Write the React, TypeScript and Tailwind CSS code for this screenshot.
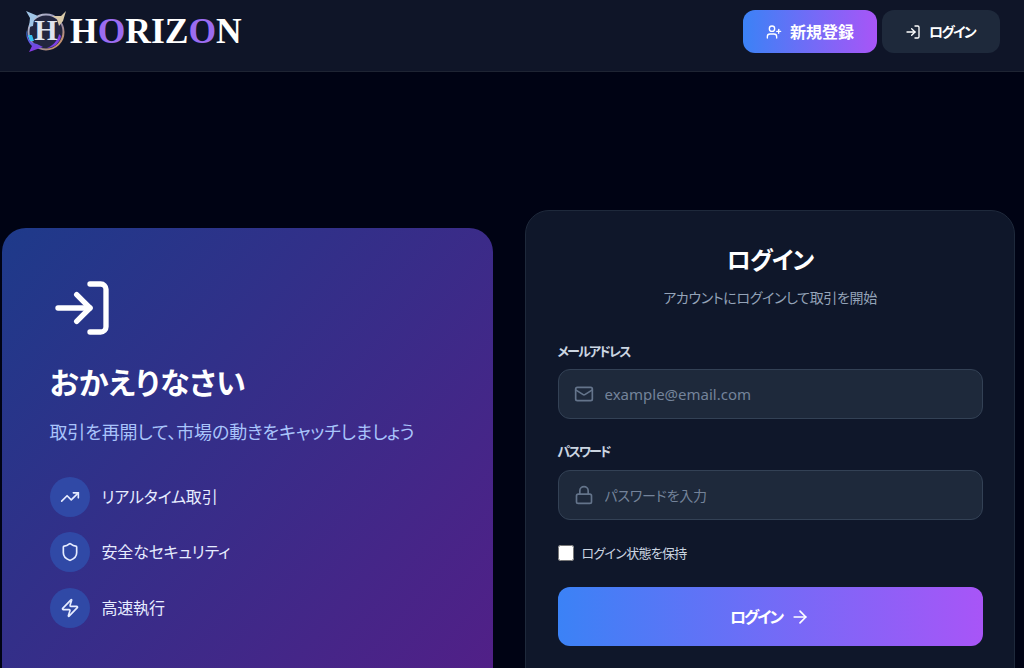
import { ArrowRight, Lock, LogIn, Mail, Shield, TrendingUp, UserPlus, Zap } from "lucide-react";

const features = [
  { icon: TrendingUp, label: "リアルタイム取引" },
  { icon: Shield, label: "安全なセキュリティ" },
  { icon: Zap, label: "高速執行" },
];

function Emblem() {
  return (
    <svg width="42" height="42" viewBox="0 0 42 42" className="shrink-0">
      <defs>
        <linearGradient id="ring" x1="0" y1="0" x2="1" y2="1">
          <stop offset="0" stopColor="#c4c9d6" />
          <stop offset="0.55" stopColor="#8a86b0" />
          <stop offset="1" stopColor="#e0964f" />
        </linearGradient>
        <linearGradient id="wing" x1="0" y1="0" x2="0" y2="1">
          <stop offset="0" stopColor="#2f7fe6" />
          <stop offset="1" stopColor="#8a35e0" />
        </linearGradient>
      </defs>
      <circle cx="21" cy="22" r="17.5" fill="#23263f" stroke="url(#ring)" strokeWidth="2" />
      <path d="M1 1 L13 6 L9 9 L8 16 L4 17 L5 8 Z" fill="#9fc4e6" />
      <path d="M41 1 L38 11 L34 16 L32 9 L27 6 L36 6 Z" fill="#d9c9a8" />
      <path d="M2 20 C2 30 6 33 12 34 L18 37 L4 42 L7 36 C3 32 0 26 2 20 Z" fill="url(#wing)" />
      <path d="M22 38 C28 36 33 30 34 24 L36 26 C35 33 29 38 22 38 Z" fill="#7b3fe4" />
      <path d="M3 25 L7 25 L9 31 L5 31 Z" fill="#36c0ef" />
      <text x="21" y="30" textAnchor="middle" fontSize="30" fontWeight="700" fill="#dfe3ee" fontFamily="'Liberation Serif', serif">H</text>
    </svg>
  );
}

export default function App() {
  return (
    <div className="h-[668px] overflow-hidden bg-[#000314] font-['Noto_Sans','Noto_Sans_CJK_JP',sans-serif] [font-feature-settings:'palt'] text-white">
      <header className="flex h-[72px] items-start justify-between border-b border-[#1e2433] bg-[#0f1528] pl-[25px] pr-6">
        <div className="flex items-center pt-[10px]">
          <Emblem />
          <span className="ml-[3px] font-['Liberation_Serif',serif] text-[35.5px] leading-[42px] font-bold text-white">
            H<span className="text-[#9b6cf0]">O</span>RIZ<span className="text-[#9b6cf0]">O</span>N
          </span>
        </div>
        <div className="flex gap-[5px] pt-[10px]">
          <button className="flex h-[43px] w-[134px] items-center justify-center gap-2 rounded-xl bg-linear-to-r/srgb from-[#3b82f6] to-[#a855f7] text-base font-semibold">
            <UserPlus className="h-4 w-4" />
            新規登録
          </button>
          <button className="flex h-[43px] w-[118px] items-center justify-center gap-2 rounded-xl bg-[#1e293b] pr-[2px] text-sm font-bold tracking-[-1.7px]">
            <LogIn className="h-4 w-4" />
            ログイン
          </button>
        </div>
      </header>

      <main className="flex gap-8 pt-[138px] pl-[1.5px]">
        <section className="mt-[17.5px] h-[584px] w-[491.5px] shrink-0 rounded-3xl bg-linear-to-br/srgb from-[#1e3a8a] to-[#581c87] p-12">
          <LogIn className="h-16 w-16 text-white" />
          <h2 className="mt-[25px] text-[30px] leading-9 font-semibold tracking-[0.3px]">おかえりなさい</h2>
          <p className="mt-[17px] text-lg leading-7 tracking-[-0.15px] text-[#a9c4fb]">取引を再開して、市場の動きをキャッチしましょう</p>
          <ul className="mt-[31px] flex flex-col gap-[15.5px]">
            {features.map(({ icon: Icon, label }) => (
              <li key={label} className="flex items-center gap-3">
                <span className="flex h-10 w-10 items-center justify-center rounded-full bg-[#3049a6]">
                  <Icon className="h-5 w-5 text-[#e6ecff]" />
                </span>
                <span className="text-base tracking-[-0.2px] text-[#e6ecff]">{label}</span>
              </li>
            ))}
          </ul>
        </section>

        <section className="h-[620px] w-[490px] shrink-0 rounded-3xl border border-[#1e293b] bg-[#0f172a] px-[31.5px] pt-[31px]">
          <h1 className="text-center text-2xl leading-9 font-semibold tracking-[-1px]">ログイン</h1>
          <p className="mt-[10px] text-center text-sm leading-5 tracking-[-0.35px] text-[#94a3b8]">アカウントにログインして取引を開始</p>

          <label className="mt-[33px] block text-[13px] leading-5 font-semibold tracking-[-1.8px] text-[#cbd5e1]">メールアドレス</label>
          <div className="relative mt-2">
            <Mail className="absolute top-[15px] left-4 h-5 w-5 text-[#64748b]" />
            <input
              type="email"
              placeholder="example@email.com"
              className="h-[50px] w-full rounded-xl border border-[#334155] bg-[#1e293b] pr-4 pl-[46px] text-[15px] outline-none placeholder:text-[#74839a]"
            />
          </div>

          <label className="mt-[22px] block text-[13px] leading-5 font-semibold tracking-[-1.8px] text-[#cbd5e1]">パスワード</label>
          <div className="relative mt-[9px]">
            <Lock className="absolute top-[15px] left-4 h-5 w-5 text-[#64748b]" />
            <input
              type="password"
              placeholder="パスワードを入力"
              className="h-[50px] w-full rounded-xl border border-[#334155] bg-[#1e293b] pr-4 pl-[46px] text-sm tracking-[-0.2px] outline-none placeholder:text-[#74839a]"
            />
          </div>

          <label className="mt-[23px] flex items-center gap-2 text-[13px] leading-5 tracking-[-0.7px] text-[#cbd5e1]">
            <input type="checkbox" className="h-4 w-4" />
            ログイン状態を保持
          </label>

          <button className="mt-[24px] flex h-[59px] w-full items-center justify-center gap-2 rounded-xl bg-linear-to-r/srgb from-[#3b82f6] to-[#a855f7] text-base font-semibold tracking-[-2px]">
            ログイン
            <ArrowRight className="h-5 w-5" />
          </button>
        </section>
      </main>
    </div>
  );
}
